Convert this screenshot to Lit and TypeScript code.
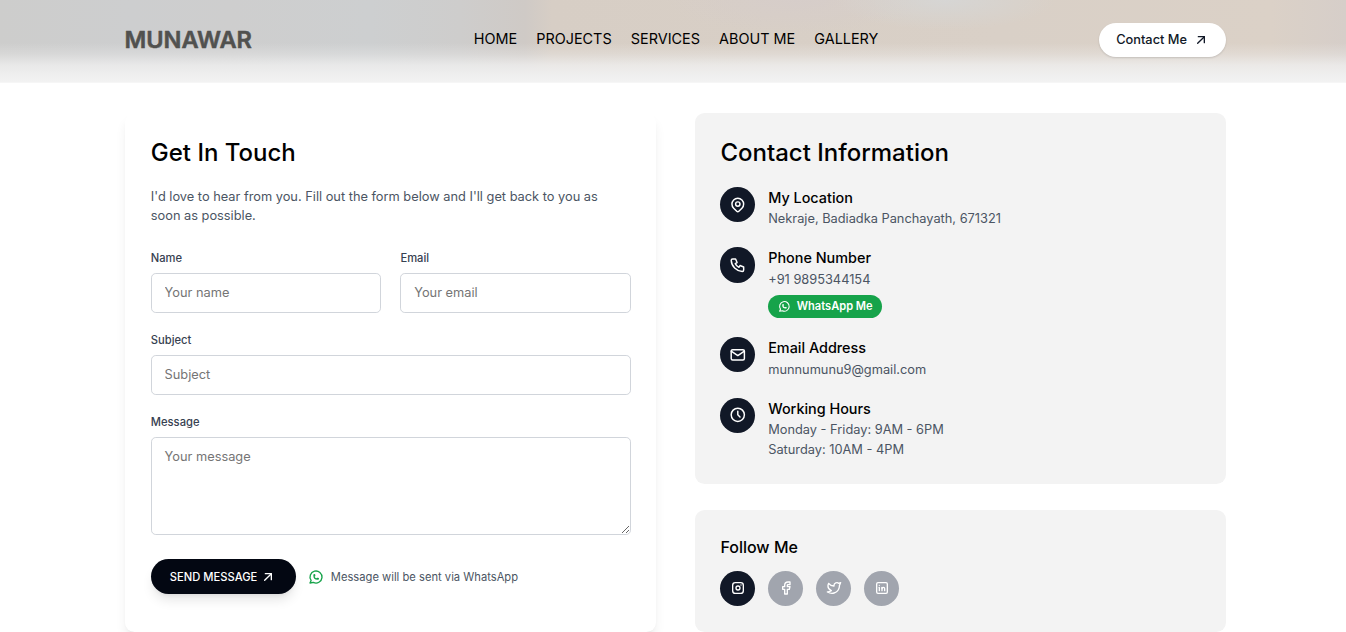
import { LitElement, html, svg, css } from "lit";
import { customElement } from "lit/decorators.js";

const icons: Record<string, unknown> = {
  arrow: svg`<path d="M17 7L7 17"/><path d="M8 7h9v9"/>`,
  pin: svg`<path d="M9 11a3 3 0 1 0 6 0a3 3 0 0 0-6 0"/><path d="M17.657 16.657l-4.243 4.243a2 2 0 0 1-2.827 0l-4.244-4.243a8 8 0 1 1 11.314 0z"/>`,
  phone: svg`<path d="M5 4h4l2 5l-2.5 1.5a11 11 0 0 0 5 5l1.5-2.5l5 2v4a2 2 0 0 1-2 2a16 16 0 0 1-15-15a2 2 0 0 1 2-2"/>`,
  mail: svg`<path d="M3 7a2 2 0 0 1 2-2h14a2 2 0 0 1 2 2v10a2 2 0 0 1-2 2H5a2 2 0 0 1-2-2z"/><path d="M3 7l9 6l9-6"/>`,
  clock: svg`<path d="M3 12a9 9 0 1 0 18 0a9 9 0 0 0-18 0"/><path d="M12 7v5l3 3"/>`,
  whatsapp: svg`<path d="M3 21l1.65-3.8a9 9 0 1 1 3.4 2.9L3 21"/><path d="M9 10a.5.5 0 0 0 1 0V9a.5.5 0 0 0-1 0v1a5 5 0 0 0 5 5h1a.5.5 0 0 0 0-1h-1a.5.5 0 0 0 0 1"/>`,
  instagram: svg`<path d="M4 8a4 4 0 0 1 4-4h8a4 4 0 0 1 4 4v8a4 4 0 0 1-4 4H8a4 4 0 0 1-4-4z"/><path d="M9 12a3 3 0 1 0 6 0a3 3 0 0 0-6 0"/><path d="M16.5 7.5v.01"/>`,
  facebook: svg`<path d="M7 10v4h3v7h4v-7h3l1-4h-4V8a1 1 0 0 1 1-1h3V3h-3a5 5 0 0 0-5 5v2H7"/>`,
  twitter: svg`<path d="M22 4.01c-1 .49-1.98.689-3 .99c-1.121-1.265-2.783-1.335-4.38-.737S11.977 6.323 12 8v1c-3.245.083-6.135-1.395-8-4c0 0-4.182 7.433 4 11c-1.872 1.247-3.739 2.088-6 2c3.308 1.803 6.913 2.423 10.034 1.517c3.58-1.04 6.522-3.723 7.651-7.742a13.84 13.84 0 0 0 .497-3.753c0-.249 1.51-2.772 1.818-4.013z"/>`,
  linkedin: svg`<path d="M4 6a2 2 0 0 1 2-2h12a2 2 0 0 1 2 2v12a2 2 0 0 1-2 2H6a2 2 0 0 1-2-2z"/><path d="M8 11v5"/><path d="M8 8v.01"/><path d="M12 16v-5"/><path d="M16 16v-3a2 2 0 0 0-4 0"/>`,
};

const icon = (name: string, cls = "i16") => html`
  <svg class="icon ${cls}" viewBox="0 0 24 24" fill="none" stroke="currentColor"
    stroke-width="2" stroke-linecap="round" stroke-linejoin="round" aria-hidden="true">${icons[name]}</svg>`;

@customElement("app-root")
export class AppRoot extends LitElement {
  static styles = css`
    :host {
      display: block;
      height: 632px;
      overflow: hidden;
      background: #fff;
      color: #000;
      font-family: Inter, sans-serif;
    }
    *, *::before, *::after { box-sizing: border-box; }
    h2, h3, p { margin: 0; font-weight: 500; }
    .icon { display: block; flex: none; }
    .i14 { width: 12.8px; height: 12.8px; }
    .i16 { width: 16px; height: 16px; }
    .i18 { width: 17.6px; height: 17.6px; }

    header {
      height: 83px;
      padding: 0 120px 0 125px;
      display: grid;
      grid-template-columns: 1fr auto 1fr;
      align-items: center;
      background:
        linear-gradient(to bottom, rgba(240,240,240,0) 43px, rgba(240,240,240,.3) 54px, rgba(240,240,240,.78) 65px, #f0f0f0 77px, #f2f2f2 82px, #fafafa 83px),
        radial-gradient(ellipse 110px 30px at 945px 0, rgba(214,214,213,.95), rgba(214,214,213,0)),
        radial-gradient(ellipse 130px 34px at 795px 0, rgba(214,205,202,.9), rgba(214,205,202,0)),
        linear-gradient(to right, #cdcdcc 0, #cdcecf 130px, #cecece 230px, #cdcfd0 370px, #cecdcc 460px, #cfcac6 525px, #d7cec5 552px, #d9d0c7 1000px, #dbd1c7 1270px, #d6cec9 1346px);
    }
    .logo { width: 130px; height: 30px; display: block; margin-top: -4px; overflow: visible; }
    .logo text {
      font: 600 22.6px Inter, sans-serif;
      fill: #51514f;
      stroke: #51514f;
      stroke-width: .5;
      stroke-linejoin: round;
    }
    nav { display: flex; gap: 19.2px; font-size: 14.4px; line-height: 20px; margin: -5px 0 0 1px; }
    .contact {
      justify-self: end;
      display: flex;
      align-items: center;
      gap: 6px;
      height: 34px;
      margin-top: -3px;
      padding: 0 17px 1px;
      border-radius: 17px;
      background: #fff;
      color: #111827;
      font-size: 12.8px;
      font-weight: 500;
      box-shadow: 0 1px 2px rgba(0,0,0,.14);
    }

    main {
      padding: 30px 120px 0 125px;
      display: grid;
      grid-template-columns: 1fr 1fr;
      column-gap: 39px;
      align-items: start;
    }
    .form {
      height: 519px;
      padding: 25.6px 25.2px 25.6px 25.8px;
      border-radius: 9.6px;
      background: #fff;
      box-shadow: 0 8px 12px -1px rgba(0,0,0,.07), 0 3px 5px -3px rgba(0,0,0,.07);
    }
    h2 { font-size: 24px; line-height: 28.8px; }
    .intro { margin-top: 19.6px; font-size: 12.8px; line-height: 19.2px; font-weight: 400; color: #4b5563; }
    .fields { display: grid; grid-template-columns: 1fr 1fr; column-gap: 19.2px; row-gap: 19.2px; margin-top: 25px; }
    .wide { grid-column: 1 / -1; }
    label { display: block; margin-bottom: 6.6px; font-size: 11.2px; line-height: 16px; font-weight: 500; color: #374151; }
    input, textarea {
      display: block;
      width: 100%;
      margin: 0;
      padding: 9.6px 12.8px;
      border: 1px solid #d1d5db;
      border-radius: 4.8px;
      background: #fff;
      font: 400 12.8px/19.2px Inter, sans-serif;
      outline: none;
    }
    input { height: 40px; }
    textarea { height: 98px; resize: vertical; }
    ::placeholder { color: #757575; opacity: 1; }
    .send-row { display: flex; align-items: center; gap: 12px; margin-top: 24.2px; }
    .send {
      display: flex;
      align-items: center;
      gap: 3px;
      width: 145px;
      height: 35px;
      padding: 1px 0 0 19px;
      border-radius: 18px;
      background: #030712;
      color: #fff;
      font-size: 11.2px;
      font-weight: 500;
      box-shadow: 0 8px 12px -2px rgba(0,0,0,.1), 0 3px 5px -3px rgba(0,0,0,.1);
    }
    .via { display: flex; align-items: center; gap: 7px; padding-top: 1px; font-size: 11.2px; color: #4b5563; }
    .via .icon { color: #16a34a; }

    .side { display: grid; row-gap: 26px; }
    .panel { border-radius: 9.6px; background: #f3f3f3; padding: 25.6px 25px; }
    .info { height: 371px; }
    .social { height: 122px; }
    .list { display: grid; row-gap: 18.6px; margin-top: 19.4px; }
    .item { display: flex; align-items: flex-start; gap: 13px; }
    .disc {
      display: grid;
      place-items: center;
      width: 35.2px;
      height: 35.2px;
      border-radius: 50%;
      background: #111827;
      color: #fff;
    }
    .muted { background: #a1a5ae; }
    h3 { font-size: 14.4px; line-height: 22px; }
    .line { font-size: 12.8px; line-height: 20px; font-weight: 400; color: #4b5563; }
    .link { padding-top: .8px; margin-bottom: -.8px; }
    .wa {
      display: flex;
      align-items: center;
      gap: 6.2px;
      width: 114px;
      height: 23px;
      margin-top: 6.1px;
      padding: 0 0 1px 9.6px;
      border-radius: 12px;
      background: #16a34a;
      color: #fff;
      font-size: 11.1px;
      font-weight: 600;
    }
    .info h2 { padding-left: .4px; }
    .follow { font-size: 16px; line-height: 24px; margin-top: -1px; padding-left: .4px; }
    .row { display: flex; gap: 12.8px; margin-top: 12.2px; }
  `;

  render() {
    const item = (name: string, title: string, lines: string[], link = false, extra: unknown = null) => html`
      <div class="item">
        <span class="disc">${icon(name, "i18")}</span>
        <div>
          <h3>${title}</h3>
          ${lines.map((l) => html`<p class="line ${link ? "link" : ""}">${l}</p>`)}
          ${extra}
        </div>
      </div>`;
    return html`
      <header>
        <svg class="logo" viewBox="0 0 130 30" role="img" aria-label="MUNAWAR">
          <text x="-0.6" y="23" textLength="127.6" lengthAdjust="spacingAndGlyphs">MUNAWAR</text>
        </svg>
        <nav>${["HOME", "PROJECTS", "SERVICES", "ABOUT ME", "GALLERY"].map((t) => html`<span>${t}</span>`)}</nav>
        <span class="contact">Contact Me ${icon("arrow")}</span>
      </header>
      <main>
        <section class="form">
          <h2>Get In Touch</h2>
          <p class="intro">I'd love to hear from you. Fill out the form below and I'll get back to you as soon as possible.</p>
          <div class="fields">
            <div><label>Name</label><input placeholder="Your name" /></div>
            <div><label>Email</label><input placeholder="Your email" /></div>
            <div class="wide"><label>Subject</label><input placeholder="Subject" /></div>
            <div class="wide"><label>Message</label><textarea placeholder="Your message"></textarea></div>
          </div>
          <div class="send-row">
            <span class="send">SEND MESSAGE ${icon("arrow")}</span>
            <span class="via">${icon("whatsapp")} Message will be sent via WhatsApp</span>
          </div>
        </section>
        <div class="side">
          <section class="panel info">
            <h2>Contact Information</h2>
            <div class="list">
              ${item("pin", "My Location", ["Nekraje, Badiadka Panchayath, 671321"])}
              ${item("phone", "Phone Number", ["+91 9895344154"], true, html`<span class="wa">${icon("whatsapp", "i14")} WhatsApp Me</span>`)}
              ${item("mail", "Email Address", ["munnumunu9@gmail.com"], true)}
              ${item("clock", "Working Hours", ["Monday - Friday: 9AM - 6PM", "Saturday: 10AM - 4PM"])}
            </div>
          </section>
          <section class="panel social">
            <h3 class="follow">Follow Me</h3>
            <div class="row">
              <span class="disc">${icon("instagram")}</span>
              <span class="disc muted">${icon("facebook")}</span>
              <span class="disc muted">${icon("twitter")}</span>
              <span class="disc muted">${icon("linkedin")}</span>
            </div>
          </section>
        </div>
      </main>`;
  }
}
